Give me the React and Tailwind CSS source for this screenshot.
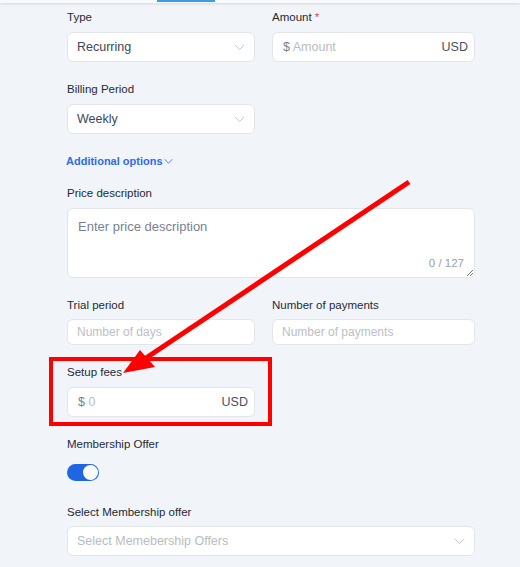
import React from "react";

const font = { fontFamily: '"Liberation Sans", Arial, sans-serif' };

function Chevron({ className = "" }) {
  return (
    <svg width="11" height="7" viewBox="0 0 11 7" className={className} fill="none">
      <path d="M0.8 0.8 L5.5 5.5 L10.2 0.8" stroke="currentColor" strokeWidth="1" />
    </svg>
  );
}

function Label({ children, mb = "mb-[6px]" }) {
  return <div className={`h-[18px] leading-[18px] text-[11.5px] text-[#1f2937] ${mb}`}>{children}</div>;
}

function Select({ value, placeholder }) {
  return (
    <div className="h-[30px] bg-white border border-[#e2e5ea] rounded-[6px] flex items-center justify-between pl-[9px] pr-[9px]">
      <span className={`text-[12.5px] ${value ? "text-[#3f4654]" : "text-[#b8bcc3]"}`}>{value || placeholder}</span>
      <Chevron className="text-[#c4c8ce]" />
    </div>
  );
}

function MoneyInput({ placeholder }) {
  return (
    <div className="h-[30px] bg-white border border-[#e2e5ea] rounded-[6px] flex items-center justify-between pl-[10px] pr-[6px]">
      <span className="text-[12.5px]">
        <span className="text-[#7a808a]">$ </span>
        <span className="text-[#b8bcc3]">{placeholder}</span>
      </span>
      <span className="text-[12.5px] text-[#4b5160]">USD</span>
    </div>
  );
}

function TextInput({ placeholder }) {
  return (
    <div className="h-[26px] bg-white border border-[#e2e5ea] rounded-[6px] flex items-center pl-[9px]">
      <span className="text-[12px] text-[#bcc0c6]">{placeholder}</span>
    </div>
  );
}

export default function App() {
  return (
    <div className="relative w-[520px] h-[567px] bg-[#f1f5f9] overflow-hidden" style={font}>
      <div className="h-[3px] bg-[#f7f9fb] shadow-[0_1px_3px_rgba(0,0,0,0.12)] flex">
        <div className="ml-[157px] w-[58px] h-[2px] bg-[#3b9edf]" />
      </div>
      <div className="pl-[67px] pt-[5px] w-[475px]">
        <div className="grid grid-cols-[188px_203px] gap-x-[17px]">
          <div className="mb-[18px]">
            <Label>Type</Label>
            <Select value="Recurring" />
          </div>
          <div className="mb-[18px]">
            <Label>
              Amount <span className="text-[#e5484d]">*</span>
            </Label>
            <MoneyInput placeholder="Amount" />
          </div>
          <div className="mb-[18px]">
            <Label>Billing Period</Label>
            <Select value="Weekly" />
          </div>
          <div />
        </div>

        <div className="h-[18px] leading-[18px] mb-[14px] flex items-center text-[11px] font-bold text-[#2f6be4] -ml-[1px]">
          Additional options
          <Chevron className="ml-[1px] text-[#2f6be4] w-[9px]" />
        </div>

        <div className="mb-[18px]">
          <Label>Price description</Label>
          <div className="relative h-[70px] bg-white border border-[#e2e5ea] rounded-[6px] px-[10px] pt-[5px]">
            <span className="text-[13px] text-[#7b8190]">Enter price description</span>
            <span className="absolute right-[10px] bottom-[5px] text-[11.5px] text-[#9aa0a8]">0 / 127</span>
            <svg className="absolute right-[0px] bottom-[0px]" width="8" height="8" viewBox="0 0 8 8">
              <path d="M7 1 L1 7 M7 4 L4 7" stroke="#555" strokeWidth="0.8" />
            </svg>
          </div>
        </div>

        <div className="grid grid-cols-[188px_203px] gap-x-[17px]">
          <div className="mb-[18px]">
            <Label mb="mb-[5px]">Trial period</Label>
            <TextInput placeholder="Number of days" />
          </div>
          <div className="mb-[18px]">
            <Label mb="mb-[5px]">Number of payments</Label>
            <TextInput placeholder="Number of payments" />
          </div>
          <div className="mb-[18px]">
            <Label>Setup fees</Label>
            <MoneyInput placeholder="0" />
          </div>
          <div />
        </div>

        <div className="mb-[22px]">
          <Label mb="mb-[11px]">Membership Offer</Label>
          <div className="w-[32px] h-[17px] rounded-full bg-[#1f66e5] flex items-center justify-end pr-[1px]">
            <div className="w-[15px] h-[15px] rounded-full bg-white" />
          </div>
        </div>

        <div>
          <Label mb="mb-[5px]">Select Membership offer</Label>
          <Select placeholder="Select Memebership Offers" />
        </div>
      </div>

      <div className="absolute left-[49px] top-[357px] w-[223px] h-[69px] border-[4px] border-[#ff0000]" />
      <svg className="absolute left-0 top-0" width="520" height="567" viewBox="0 0 520 567">
        <line x1="409" y1="182" x2="143" y2="360" stroke="#ff0000" strokeWidth="5" />
        <polygon points="123,373 140,350 155,367" fill="#ff0000" />
      </svg>
    </div>
  );
}
